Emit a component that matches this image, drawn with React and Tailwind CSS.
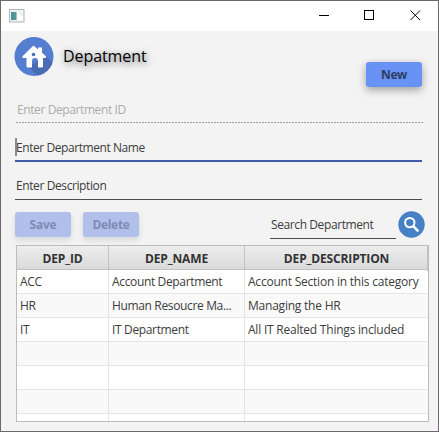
const ROWS = [
  ['ACC', 'Account Department', 'Account Section in this category'],
  ['HR', 'Human Resoucre Ma...', 'Managing the HR'],
  ['IT', 'IT Department', 'All IT Realted Things included'],
  ['', '', ''],
  ['', '', ''],
  ['', '', ''],
];

function TitleBar() {
  return (
    <header className="flex h-[30px] shrink-0 items-center justify-between bg-white pl-2">
      <svg width="16" height="14" viewBox="0 0 16 14">
        <rect x="0.5" y="0.5" width="14.500" height="12.5" fill="#f1f1f1" stroke="#b3b6b8" />
        <rect x="2" y="3" width="5.500" height="8" fill="#4f9c94" />
        <path d="M2 3h2.500v8h-2.500z" fill="#5a83a8" opacity="0.6" />
        <rect x="8.500" y="2.500" width="5.500" height="9" fill="#fff" />
        <path d="M10 4h1.500M12.500 4h1M12.500 6h1" stroke="#b9cdd0" />
      </svg>
      <svg width="138" height="30" viewBox="0 0 138 30" fill="none" stroke="#000" className="ml-auto">
        <path d="M19 14.500h10" />
        <rect x="64.500" y="9.500" width="9" height="9" />
        <path d="M110.500 9.500l9.500 9.500M120 9.500l-9.500 9.500" />
      </svg>
    </header>
  );
}

function HomeIcon() {
  return (
    <svg width="40" height="40" viewBox="0 0 40 40">
      <defs>
        <clipPath id="disc">
          <circle cx="20" cy="19.500" r="19.500" />
        </clipPath>
      </defs>
      <circle cx="20" cy="19.500" r="19.500" fill="#557ed0" />
      <path clipPath="url(#disc)" d="M29 21l2-2.500 12 12-8 12H28L14 30z" fill="#4a6cb3" />
      <path
        d="M19.500 8.500l4.500 4V10.500h4v5.300l3.700 3.200c1 1-.3 2.600-1.500 2l-1.200-.3v8.300q0 1.500-1.500 1.500h-3.500v-6.500a3 3 0 0 0-6 0v6.500h-4q-1.500 0-1.500-1.500v-8.300l-2.200.3c-1.400.5-2.700-1-1.500-2z"
        fill="#fff"
      />
      <circle cx="19.500" cy="17.500" r="1.800" fill="#4d70ba" />
    </svg>
  );
}

function SearchIcon() {
  return (
    <svg width="27" height="27" viewBox="0 0 27 27" fill="none">
      <circle cx="13.500" cy="13.500" r="13.200" fill="#4581c4" />
      <circle cx="11.800" cy="11.600" r="4.700" stroke="#fff" strokeWidth="2" />
      <path d="M15.300 15.200l4.300 4.500" stroke="#fff" strokeWidth="2.500" strokeLinecap="round" />
    </svg>
  );
}

export default function App() {
  return (
    <div className="flex h-[432px] w-[439px] flex-col overflow-hidden border border-[#6b696b] bg-[#f3f3f3] font-['Open_Sans','Noto_Sans',sans-serif] text-[12px] leading-[16px] tracking-[-0.4px] text-[#3c3c3c]">
      <TitleBar />
      <div className="flex h-[60px] shrink-0 pt-[6px] pl-[12.5px] pr-[16px]">
        <HomeIcon />
        <h1 className="mt-[7px] ml-[9.5px] text-[16px] leading-[24px] tracking-[-0.08px] text-black [text-shadow:1px_2px_7px_rgba(0,0,0,0.6)]">
          Depatment
        </h1>
        <button className="mt-[25px] ml-auto h-[25px] w-[56px] rounded-[3px] bg-[#6892f3] font-bold text-[#2c3d66] shadow-[0_3px_8px_rgba(0,0,0,0.35)]">
          New
        </button>
      </div>
      <div className="ml-[15px] flex h-[32px] w-[408px] shrink-0 flex-col pt-[11px] text-[#acacac]">
        <span className="h-[20px] pl-px">Enter Department ID</span>
        <svg width="408" height="1">
          <path d="M0 .5H408" stroke="#a2a2a2" strokeDasharray="2 1" />
        </svg>
      </div>
      <div className="ml-[14px] h-[39px] w-[407px] shrink-0 border-b-2 border-[#4059a9] pt-[15px]">
        <div className="flex h-[18px] items-center border-l-2 border-[#8b8b8b] pt-[2px]">
          <span className="-ml-px tracking-[-0.43px]">Enter Department Name</span>
        </div>
      </div>
      <div className="ml-[14px] h-[38px] w-[407px] shrink-0 border-b border-[#4d4d4d] pt-[16px] pl-px">Enter Description</div>
      <div className="flex h-[45px] shrink-0 pl-[14px]">
        <button className="mt-[12px] h-[25px] w-[56px] rounded-[3px] bg-[#b1c0ea] font-bold tracking-[-0.2px] text-[#7e8bb5] shadow-[0_3px_6px_rgba(0,0,0,0.12)]">
          Save
        </button>
        <button className="mt-[12px] ml-[12px] h-[25px] w-[56px] rounded-[3px] bg-[#b1c0ea] font-bold tracking-[-0.3px] text-[#7e8bb5] shadow-[0_3px_6px_rgba(0,0,0,0.12)]">
          Delete
        </button>
        <div className="ml-[131px] h-[39px] w-[126px] border-b border-[#4d4d4d] pt-[17px] pl-px">Search Department</div>
        <div className="mt-[11px] ml-[1.5px]">
          <SearchIcon />
        </div>
      </div>
      <div className="ml-[15px] h-[177px] w-[413px] shrink-0 overflow-hidden border border-[#bcbcbc] bg-white">
        <div className="grid h-[24px] grid-cols-[92px_136px_183px] border-b border-[#c2c2c2] bg-linear-to-b from-[#ededed] to-[#dadada] text-center font-bold leading-[25px] tracking-[-0.15px] text-[#333]">
          <div className="border-r border-[#c2c2c2]">DEP_ID</div>
          <div className="border-r border-[#c2c2c2]">DEP_NAME</div>
          <div className="border-r border-[#c2c2c2] pl-px">DEP_DESCRIPTION</div>
        </div>
        {ROWS.map((row, i) => (
          <div
            key={i}
            className="grid h-[24px] grid-cols-[92px_136px_179px] border-b border-[#e5e5e5] leading-[24px] whitespace-nowrap odd:bg-[#f9f9f9] even:bg-white"
          >
            {row.map((cell, j) => (
              <div
                key={j}
                className="border-r border-[#e5e5e5] pl-[3px] tracking-[-0.35px] last:border-r-0 last:tracking-[-0.22px]"
              >
                {cell}
              </div>
            ))}
          </div>
        ))}
        <div className="grid h-[7px] grid-cols-[92px_136px_179px]">
          <div className="border-r border-[#e5e5e5]" />
          <div className="border-r border-[#e5e5e5]" />
        </div>
      </div>
    </div>
  );
}
